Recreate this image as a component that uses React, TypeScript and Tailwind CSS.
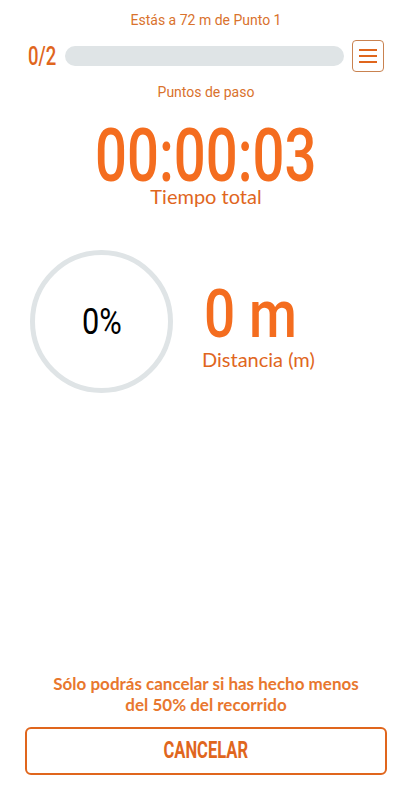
import React from 'react';

const condensed = { fontFamily: 'Roboto, "Noto Sans", sans-serif' };
const lato = { fontFamily: 'Lato, sans-serif' };

const App: React.FC = () => {
  return (
    <div className="w-[412px] h-[800px] bg-white flex flex-col overflow-hidden" style={condensed}>
      {/* Header */}
      <p className="pt-[10px] text-center text-[14px] leading-[20px] text-[#d9722d]">Estás a 72 m de Punto 1</p>

      <div className="mt-[10px] h-[32px] flex items-center pl-[28px] pr-[28px]">
        <span className="w-[30px] text-[25px] leading-none font-medium text-[#e0661d] origin-left scale-x-[0.74] inline-block">0/2</span>
        <div className="ml-[7px] flex-1 h-[20px] rounded-full bg-[#dfe4e6]" />
        <button className="ml-[8px] w-[32px] h-[32px] rounded-[4px] border border-[#c98250] flex flex-col items-center justify-center gap-[4px]">
          <span className="block w-[18px] h-[2px] bg-[#e0661d]" />
          <span className="block w-[18px] h-[2px] bg-[#e0661d]" />
          <span className="block w-[18px] h-[2px] bg-[#e0661d]" />
        </button>
      </div>

      <p className="mt-[10px] text-center text-[14px] leading-[20px] text-[#d9722d]">Puntos de paso</p>

      {/* Timer */}
      <div className="mt-[24px] flex flex-col items-center">
        <span className="inline-block text-[74px] leading-[60px] font-medium text-[#f46d1f] scale-x-[0.76]">00:00:03</span>
        <span className="text-[20px] leading-[20px] text-[#e0661d]" style={lato}>Tiempo total</span>
      </div>

      {/* Progress + distance */}
      <div className="mt-[44px] flex items-center pl-[30px]">
        <div className="w-[143px] h-[143px] rounded-full border-[5px] border-[#dfe4e6] flex items-center justify-center">
          <span className="inline-block text-[37px] leading-none text-black scale-x-[0.83]">0%</span>
        </div>
        <div className="ml-[31px] pt-[12px] flex flex-col">
          <span className="inline-block text-[67px] leading-[60px] font-medium text-[#f46d1f] origin-left scale-x-[0.82]">0 m</span>
          <span className="mt-[2px] -ml-[2px] text-[20px] leading-[26px] text-[#e0661d]" style={lato}>Distancia (m)</span>
        </div>
      </div>

      <div className="flex-1" />

      {/* Footer */}
      <p className="px-[42px] text-center text-[17px] leading-[21px] font-bold text-[#e8772e]" style={lato}>
        Sólo podrás cancelar si has hecho menos del 50% del recorrido
      </p>
      <div className="mt-[12px] mb-[25px] px-[25px]">
        <button className="w-full h-[48px] rounded-[6px] border-2 border-[#e0661d] flex items-center justify-center">
          <span className="inline-block text-[23px] font-bold text-[#e0661d] scale-x-[0.72]">CANCELAR</span>
        </button>
      </div>
    </div>
  );
};

export default App;
